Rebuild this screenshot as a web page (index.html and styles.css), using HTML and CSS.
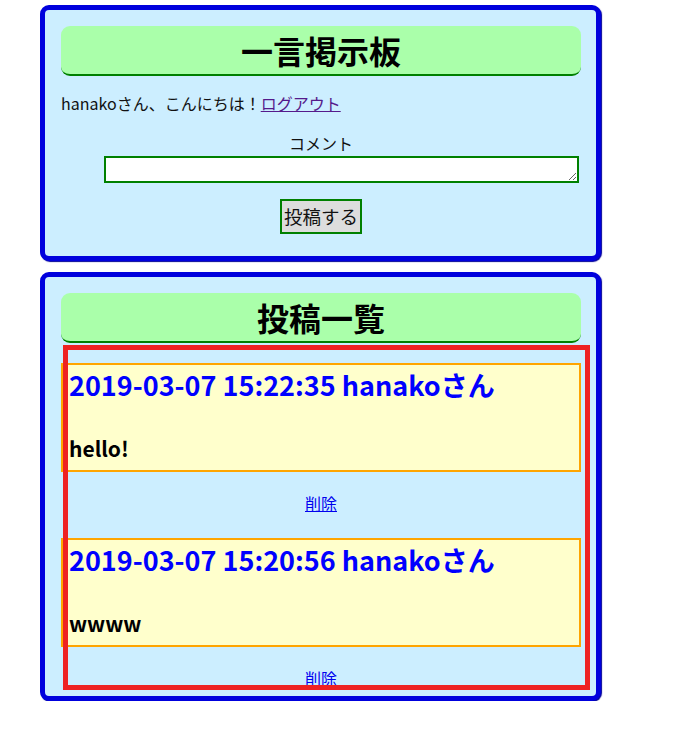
FILE: index.html
```html
<!DOCTYPE html>
<html lang="ja">
<head>
<meta charset="utf-8">
<title>一言掲示板</title>
<link rel="stylesheet" href="styles.css">
</head>
<body>
<section class="board">
  <h1 class="board-title">一言掲示板</h1>
  <p class="greeting">hanakoさん、こんにちは！<a class="logout" href="#">ログアウト</a></p>
  <form class="post-form">
    <label class="form-label" for="comment">コメント</label>
    <textarea class="form-text" id="comment"></textarea>
    <button class="form-button" type="button">投稿する</button>
  </form>
</section>
<section class="board board-list">
  <h1 class="board-title">投稿一覧</h1>
  <div class="list">
    <div class="frame"></div>
    <article class="post">
      <h2 class="post-head">2019-03-07 15:22:35 hanakoさん</h2>
      <h3 class="post-body">hello!</h3>
    </article>
    <p class="del"><a href="#">削除</a></p>
    <article class="post">
      <h2 class="post-head">2019-03-07 15:20:56 hanakoさん</h2>
      <h3 class="post-body">wwww</h3>
    </article>
    <p class="del del-last"><a href="#">削除</a></p>
  </div>
</section>
</body>
</html>
```

FILE: styles.css
```css
body {
  margin: 5px 0 0 40px;
  font-family: "Noto Sans CJK JP", "Noto Sans", sans-serif;
  font-size: 16px;
  color: #111;
  background: #fff;
}

.board {
  width: 520px;
  padding: 16px 15px 22px 16px;
  background: #cceeff;
  border: 5px solid #0000dd;
  border-radius: 9px;
  box-shadow: 1px 1px 1px #00009a;
}

.board-list {
  margin-top: 11px;
  padding-bottom: 6px;
}

.board-title {
  margin: 0;
  height: 48px;
  line-height: 48px;
  font-size: 32px;
  font-weight: bold;
  text-align: center;
  color: #000;
  background: #aaffaa;
  border-bottom: 2px solid #008000;
  border-radius: 9px;
}

.greeting {
  margin: 15px 0 0;
  line-height: 24px;
}

.logout {
  color: #551a8b;
}

.post-form {
  display: flex;
  flex-direction: column;
  align-items: center;
  margin-top: 16px;
}

.form-label {
  line-height: 24px;
}

.form-text {
  align-self: flex-start;
  margin: 1px 0 0 43px;
  width: 475px;
  height: 27px;
  box-sizing: border-box;
  border: 2px solid #008000;
  background: #fff;
  padding: 0;
  font-family: inherit;
}

.form-button {
  margin-top: 16px;
  padding: 2px 2px;
  height: 35px;
  box-sizing: border-box;
  font-family: inherit;
  font-size: 18.5px;
  line-height: 25px;
  color: #111;
  background: #dddddd;
  border: 2px solid #008000;
}

.list {
  position: relative;
  padding-top: 20px;
}

.frame {
  position: absolute;
  top: 2px;
  left: 2px;
  width: 527px;
  height: 345px;
  box-sizing: border-box;
  border: 5px solid #ee2222;
  pointer-events: none;
  z-index: 1;
}

.post {
  height: 109px;
  box-sizing: border-box;
  padding: 4px 6px 0;
  background: #ffffcc;
  border: 2px solid #ffa500;
}

.post-head {
  margin: 0;
  font-size: 27px;
  line-height: 32px;
  font-weight: bold;
  color: #0000ff;
}

.post-body {
  margin: 33px 0 0;
  font-size: 21px;
  line-height: 28px;
  font-weight: bold;
  color: #000;
}

.del {
  margin: 19px 0 23px;
  line-height: 24px;
  text-align: center;
  font-size: 16px;
}

.del a {
  color: #0000ee;
}

.del-last {
  margin-bottom: 0;
}
```
